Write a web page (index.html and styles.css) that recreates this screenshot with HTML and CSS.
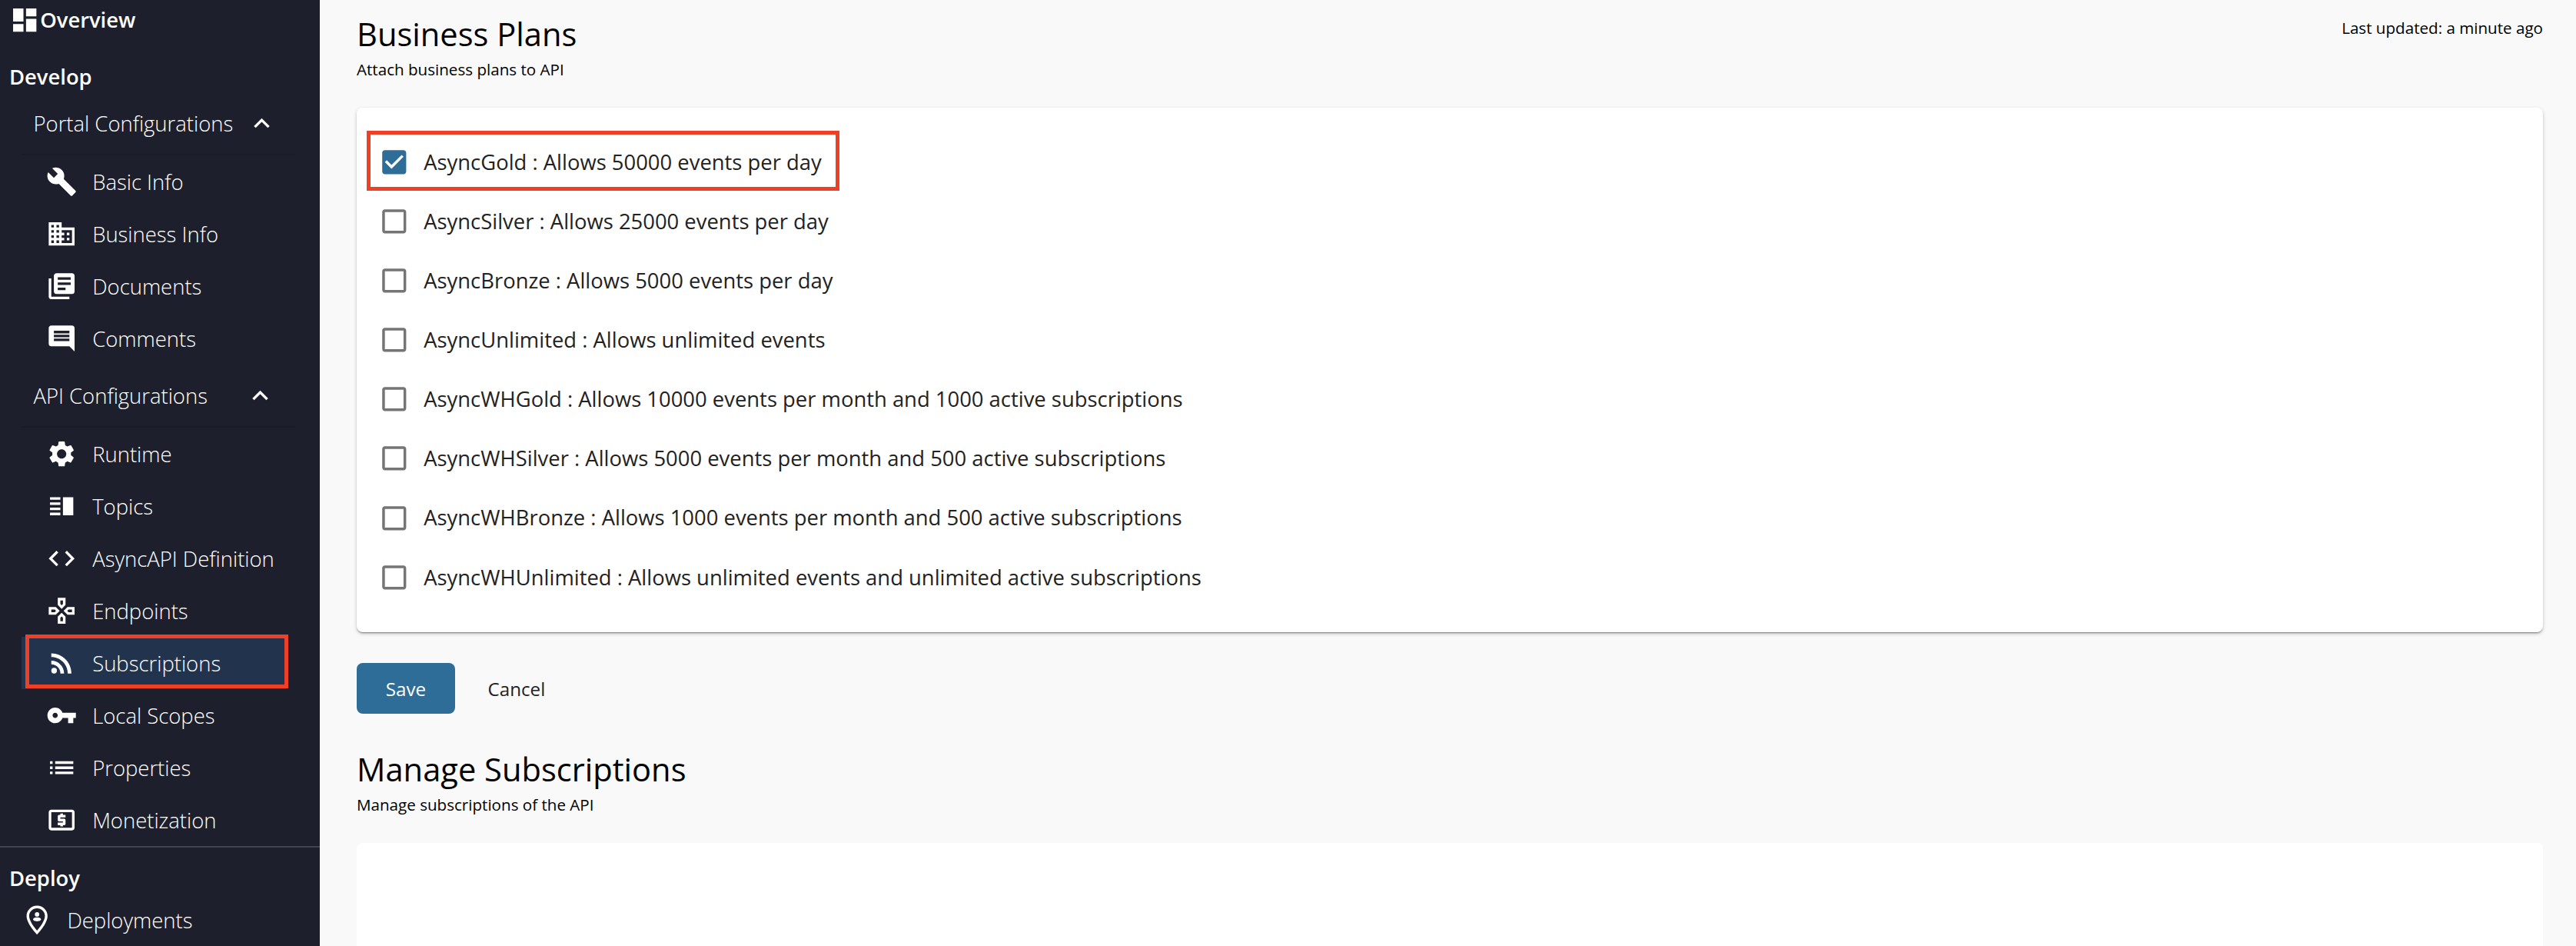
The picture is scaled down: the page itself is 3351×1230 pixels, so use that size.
FILE: index.html
```html
<!DOCTYPE html>
<html lang="en">
<head>
<meta charset="utf-8">
<title>Business Plans</title>
<link rel="stylesheet" href="styles.css">
</head>
<body>
<svg class="defs" width="0" height="0" aria-hidden="true">
  <symbol id="box-empty" viewBox="0 0 24 24"><path d="M19 5v14H5V5h14m0-2H5c-1.1 0-2 .9-2 2v14c0 1.1.9 2 2 2h14c1.1 0 2-.9 2-2V5c0-1.1-.9-2-2-2z"/></symbol>
  <symbol id="box-checked" viewBox="0 0 24 24"><path d="M19 3H5c-1.11 0-2 .9-2 2v14c0 1.1.89 2 2 2h14c1.11 0 2-.9 2-2V5c0-1.1-.89-2-2-2zm-9 14l-5-5 1.41-1.41L10 14.17l7.59-7.59L19 8l-9 9z"/></symbol>
  <symbol id="chevron-up" viewBox="0 0 24 24"><path d="M12 8l-6 6 1.41 1.41L12 10.83l4.59 4.58L18 14z"/></symbol>
</svg>
<div class="app">
  <nav class="sidebar">
    <a class="overview"><svg class="icon" viewBox="0 0 24 24"><path d="M3 13h8V3H3v10zm0 8h8v-6H3v6zm10 0h8V11h-8v10zm0-18v6h8V3h-8z"/></svg><span>Overview</span></a>
    <h2 class="section">Develop</h2>
    <div class="group-head"><span>Portal Configurations</span><svg class="chevron chevron-portal"><use href="#chevron-up"/></svg></div>
    <div class="group">
      <a class="item"><svg class="icon" viewBox="0 0 24 24"><path d="M22.7 19l-9.1-9.1c.9-2.3.4-5-1.5-6.9-2-2-5-2.4-7.4-1.3L9 6 6 9 1.6 4.7C.4 7.1.9 10.1 2.9 12.1c1.9 1.9 4.6 2.4 6.9 1.5l9.1 9.1c.4.4 1 .4 1.4 0l2.3-2.3c.5-.4.5-1.1.1-1.4z"/></svg><span>Basic Info</span></a>
      <a class="item"><svg class="icon" viewBox="0 0 24 24"><path d="M12 7V3H2v18h20V7H12zM6 19H4v-2h2v2zm0-4H4v-2h2v2zm0-4H4V9h2v2zm0-4H4V5h2v2zm4 12H8v-2h2v2zm0-4H8v-2h2v2zm0-4H8V9h2v2zm0-4H8V5h2v2zm10 12h-8v-2h2v-2h-2v-2h2v-2h-2V9h8v10zm-2-8h-2v2h2v-2zm0 4h-2v2h2v-2z"/></svg><span>Business Info</span></a>
      <a class="item"><svg class="icon" viewBox="0 0 24 24"><path d="M4 6H2v14c0 1.1.9 2 2 2h14v-2H4V6zm16-4H8c-1.1 0-2 .9-2 2v12c0 1.1.9 2 2 2h12c1.1 0 2-.9 2-2V4c0-1.1-.9-2-2-2zm-1 9H9V9h10v2zm-4 4H9v-2h6v2zm4-8H9V5h10v2z"/></svg><span>Documents</span></a>
      <a class="item"><svg class="icon" viewBox="0 0 24 24"><path d="M21.99 4c0-1.1-.89-2-1.99-2H4c-1.1 0-2 .9-2 2v12c0 1.1.9 2 2 2h14l4 4-.01-18zM18 14H6v-2h12v2zm0-3H6V9h12v2zm0-3H6V6h12v2z"/></svg><span>Comments</span></a>
    </div>
    <div class="group-head"><span>API Configurations</span><svg class="chevron"><use href="#chevron-up"/></svg></div>
    <div class="group">
      <a class="item"><svg class="icon" viewBox="0 0 24 24"><path d="M19.14 12.94c.04-.3.06-.61.06-.94 0-.32-.02-.64-.07-.94l2.03-1.58c.18-.14.23-.41.12-.61l-1.92-3.32c-.12-.22-.37-.29-.59-.22l-2.39.96c-.5-.38-1.03-.7-1.62-.94l-.36-2.54c-.04-.24-.24-.41-.48-.41h-3.84c-.24 0-.43.17-.47.41l-.36 2.54c-.59.24-1.13.57-1.62.94l-2.39-.96c-.22-.08-.47 0-.59.22L2.74 8.87c-.12.21-.08.47.12.61l2.03 1.58c-.05.3-.09.63-.09.94s.02.64.07.94l-2.03 1.58c-.18.14-.23.41-.12.61l1.92 3.32c.12.22.37.29.59.22l2.39-.96c.5.38 1.03.7 1.62.94l.36 2.54c.05.24.24.41.48.41h3.84c.24 0 .44-.17.47-.41l.36-2.54c.59-.24 1.13-.56 1.62-.94l2.39.96c.22.08.47 0 .59-.22l1.92-3.32c.12-.22.07-.47-.12-.61l-2.01-1.58zM12 15.6c-1.98 0-3.6-1.62-3.6-3.6s1.62-3.6 3.6-3.6 3.6 1.62 3.6 3.6-1.62 3.6-3.6 3.6z"/></svg><span>Runtime</span></a>
      <a class="item"><svg class="icon" viewBox="0 0 24 24"><path d="M3 15h8v-2H3v2zm0 4h8v-2H3v2zm0-8h8V9H3v2zm0-6v2h8V5H3zm10 0h8v14h-8V5z"/></svg><span>Topics</span></a>
      <a class="item"><svg class="icon" viewBox="0 0 24 24"><path d="M9.4 16.6L4.8 12l4.6-4.6L8 6l-6 6 6 6 1.4-1.4zm5.2 0l4.6-4.6-4.6-4.6L16 6l6 6-6 6-1.4-1.4z"/></svg><span>AsyncAPI Definition</span></a>
      <a class="item"><svg class="icon" viewBox="0 0 24 24"><path d="M13 4v2.67l-1 1-1-1V4h2m7 7v2h-2.67l-1-1 1-1H20M6.67 11l1 1-1 1H4v-2h2.67M12 16.33l1 1V20h-2v-2.67l1-1M15 2H9v5.5l3 3 3-3V2zm7 7h-5.5l-3 3 3 3H22V9zM7.5 9H2v6h5.5l3-3-3-3zm4.5 4.5l-3 3V22h6v-5.5l-3-3z"/></svg><span>Endpoints</span></a>
      <a class="item selected"><svg class="icon" viewBox="0 0 24 24"><circle cx="6.18" cy="17.82" r="2.18"/><path d="M4 4.44v2.83c7.03 0 12.73 5.7 12.73 12.73h2.83c0-8.59-6.97-15.56-15.56-15.56zm0 5.66v2.83c3.9 0 7.07 3.17 7.07 7.07h2.83c0-5.47-4.43-9.9-9.9-9.9z"/></svg><span>Subscriptions</span></a>
      <a class="item"><svg class="icon" viewBox="0 0 24 24"><path d="M12.65 10C11.83 7.67 9.61 6 7 6c-3.31 0-6 2.69-6 6s2.69 6 6 6c2.61 0 4.83-1.67 5.65-4H17v4h4v-4h2v-4H12.65zM7 14c-1.1 0-2-.9-2-2s.9-2 2-2 2 .9 2 2-.9 2-2 2z"/></svg><span>Local Scopes</span></a>
      <a class="item"><svg class="icon" viewBox="0 0 24 24"><path d="M3 13h2v-2H3v2zm0 4h2v-2H3v2zm0-8h2V7H3v2zm4 4h14v-2H7v2zm0 4h14v-2H7v2zM7 7v2h14V7H7z"/></svg><span>Properties</span></a>
      <a class="item"><svg class="icon" viewBox="0 0 24 24"><path d="M11 17h2v-1h1c.55 0 1-.45 1-1v-3c0-.55-.45-1-1-1h-3v-1h4V8h-2V7h-2v1h-1c-.55 0-1 .45-1 1v3c0 .55.45 1 1 1h3v1H9v2h2v1zm9-13H4c-1.11 0-1.99.89-1.99 2L2 18c0 1.11.89 2 2 2h16c1.11 0 2-.89 2-2V6c0-1.11-.89-2-2-2zm0 14H4V6h16v12z"/></svg><span>Monetization</span></a>
    </div>
    <div class="deploy">
      <h2 class="section">Deploy</h2>
      <a class="item item-top"><svg class="icon" viewBox="0 0 24 24"><path fill-rule="evenodd" d="M12 .9C7.5.9 3.9 4.4 3.9 8.9 3.9 15 12 23.2 12 23.2s8.1-8.2 8.1-14.3C20.1 4.4 16.5.9 12 .9zm0 19.3C9.5 17.2 5.9 12.5 5.9 8.9 5.9 5.5 8.6 2.9 12 2.9s6.1 2.6 6.1 6c0 3.6-3.6 8.3-6.1 11.3z"/><circle cx="12" cy="7.7" r="1.7"/><ellipse cx="12" cy="11.5" rx="3" ry="1.5"/></svg><span>Deployments</span></a>
    </div>
  </nav>
  <main class="main">
    <header class="page-head">
      <div>
        <h1 class="title">Business Plans</h1>
        <p class="caption">Attach business plans to API</p>
      </div>
      <p class="updated">Last updated: a minute ago</p>
    </header>
    <section class="card plans">
      <label class="plan checked"><svg class="box"><use href="#box-checked"/></svg><span>AsyncGold : Allows 50000 events per day</span></label>
      <label class="plan"><svg class="box"><use href="#box-empty"/></svg><span>AsyncSilver : Allows 25000 events per day</span></label>
      <label class="plan"><svg class="box"><use href="#box-empty"/></svg><span>AsyncBronze : Allows 5000 events per day</span></label>
      <label class="plan"><svg class="box"><use href="#box-empty"/></svg><span>AsyncUnlimited : Allows unlimited events</span></label>
      <label class="plan"><svg class="box"><use href="#box-empty"/></svg><span>AsyncWHGold : Allows 10000 events per month and 1000 active subscriptions</span></label>
      <label class="plan"><svg class="box"><use href="#box-empty"/></svg><span>AsyncWHSilver : Allows 5000 events per month and 500 active subscriptions</span></label>
      <label class="plan"><svg class="box"><use href="#box-empty"/></svg><span>AsyncWHBronze : Allows 1000 events per month and 500 active subscriptions</span></label>
      <label class="plan"><svg class="box"><use href="#box-empty"/></svg><span>AsyncWHUnlimited : Allows unlimited events and unlimited active subscriptions</span></label>
    </section>
    <div class="actions">
      <button class="btn btn-primary">Save</button>
      <button class="btn btn-text">Cancel</button>
    </div>
    <h1 class="title">Manage Subscriptions</h1>
    <p class="caption">Manage subscriptions of the API</p>
    <section class="card manage"></section>
  </main>
</div>
</body>
</html>
```
FILE: styles.css
```css
*,
*::before,
*::after {
  box-sizing: border-box;
}

body {
  margin: 0;
  background: #f9f9f9;
  font-family: "Open Sans", "Noto Sans", sans-serif;
  font-size: 27.42px;
}

h1,
h2,
p {
  margin: 0;
}

.defs {
  display: none;
}

.app {
  display: flex;
  height: 1230px;
  overflow: hidden;
}

/* Sidebar */
.sidebar {
  flex: none;
  width: 416px;
  background: #1d1f2d;
  color: #fff;
  font-size: 27.45px;
  font-weight: 300;
  white-space: nowrap;
}

.icon {
  flex: none;
  width: 40.4px;
  height: 40.4px;
  fill: #fff;
}

.overview {
  display: flex;
  align-items: center;
  height: 52px;
  padding-left: 11.8px;
  font-size: 27.4px;
  font-weight: 600;
}

.overview span {
  padding-bottom: 2px;
}

.section {
  height: 40px;
  margin-top: 28px;
  padding-left: 12px;
  font-size: 27.4px;
  font-weight: 600;
  line-height: 40px;
}

.group-head {
  display: flex;
  align-items: center;
  justify-content: space-between;
  height: 80px;
  padding: 0 57px 0 43.5px;
}

.chevron {
  width: 41px;
  height: 41px;
  fill: #fff;
}

.chevron-portal {
  margin-right: -2px;
}

.group {
  margin: 0 32px 0 28px;
  border-top: 2px solid #1a1b28;
}

.item {
  display: flex;
  align-items: center;
  gap: 20px;
  height: 68px;
  margin-right: 12px;
  padding-left: 31.8px;
}

.selected {
  position: relative;
  background: #22344d;
}

.selected::after {
  content: "";
  position: absolute;
  inset: -3px -3px 1px 5px;
  border: 5px solid #ee4026;
}

.deploy {
  padding-top: 20px;
  border-top: 2px solid #414350;
}

.deploy .section {
  margin-top: 0;
}

.item-top {
  gap: 19.2px;
  padding-left: 27.8px;
}

/* Main column */
.main {
  flex: 1;
  display: flex;
  flex-direction: column;
  padding: 15px 43px 0 48px;
  color: #000;
}

.page-head {
  display: flex;
  justify-content: space-between;
}

.title {
  font-size: 41.65px;
  font-weight: 400;
  line-height: 57px;
}

.caption {
  margin: 4px 0 36px;
  font-size: 20.6px;
  line-height: 28px;
}

.updated {
  margin-top: 7px;
  font-size: 20.6px;
  line-height: 28px;
}

.card {
  background: #fff;
  border-radius: 8px;
}

.plans {
  height: 682px;
  padding: 32px 28px;
  box-shadow: 0 2px 2px -1px rgba(0, 0, 0, .4), 0 2px 5px rgba(0, 0, 0, .2);
}

.plan {
  display: flex;
  align-items: center;
  gap: 17.6px;
  height: 77.15px;
  color: #222;
}

.plan span {
  padding-bottom: 1px;
}

.box {
  width: 41.6px;
  height: 41.6px;
  fill: #757575;
}

.checked {
  position: relative;
}

.checked .box {
  fill: #2e6d98;
}

.checked::after {
  content: "";
  position: absolute;
  left: -15px;
  top: -2px;
  width: 615px;
  height: 78px;
  border: 5px solid #ee4026;
}

.actions {
  display: flex;
  align-items: center;
  margin: 40px 0 43px;
}

.btn {
  height: 66px;
  padding: 0;
  border: 0;
  border-radius: 8px;
  background: none;
  color: #222;
  font-family: inherit;
  font-size: 24.2px;
}

.btn-primary {
  width: 128px;
  background: #2e6d98;
  color: #fff;
  font-weight: 500;
}

.btn-text {
  margin-left: 42.5px;
}

.manage {
  flex: 1;
  border-radius: 8px 8px 0 0;
}
```
